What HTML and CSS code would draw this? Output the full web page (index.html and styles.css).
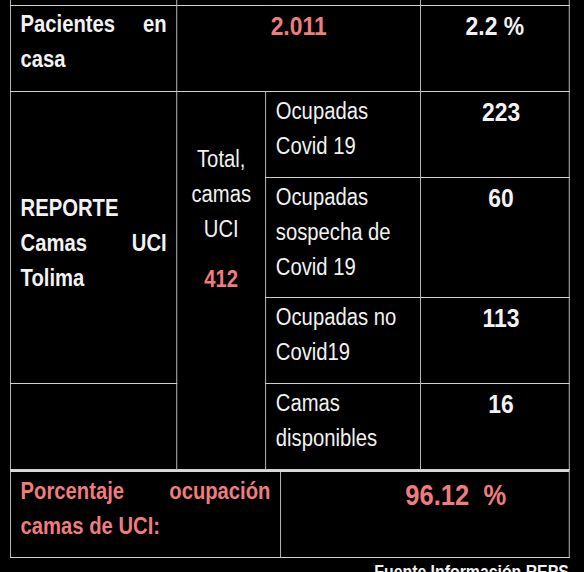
FILE: index.html
```html
<!DOCTYPE html>
<html lang="es">
<head>
    <meta charset="UTF-8">
    <meta name="viewport" content="width=device-width, initial-scale=1.0">
    <title>Reporte camas UCI Tolima</title>
    <link rel="stylesheet" href="styles.css">
</head>
<body>
    <!-- el texto original es Arial "apretado", por eso todo el bloque va con scaleX -->
    <div class="report">
        <table class="grid">
            <colgroup>
                <col class="c1">
                <col class="c2">
                <col class="c3">
                <col class="c4">
            </colgroup>
            <!-- fila anterior, cortada por arriba -->
            <tr class="cut">
                <td></td>
                <td colspan="2"></td>
                <td></td>
            </tr>
            <tr class="r-md">
                <td class="label"><span class="jline">Pacientes en</span>casa</td>
                <td colspan="2" class="num red">2.011</td>
                <td class="num">2.2 %</td>
            </tr>
            <tr class="r-md">
                <td rowspan="3" class="label mid"><span>REPORTE</span><span class="jline">Camas UCI</span>Tolima</td>
                <td rowspan="4" class="total">Total,<br>camas<br>UCI<br><b class="red">412</b></td>
                <td class="desc">Ocupadas<br>Covid 19</td>
                <td class="num val">223</td>
            </tr>
            <tr class="r-lg">
                <td class="desc">Ocupadas<br>sospecha de<br>Covid 19</td>
                <td class="num val">60</td>
            </tr>
            <tr class="r-md">
                <td class="desc">Ocupadas no<br>Covid19</td>
                <td class="num val">113</td>
            </tr>
            <tr class="r-md">
                <td></td>
                <td class="desc">Camas<br>disponibles</td>
                <td class="num val">16</td>
            </tr>
        </table>
        <table class="grid foot">
            <colgroup>
                <col class="f1">
                <col class="f2">
            </colgroup>
            <tr class="r-md">
                <td class="label red"><span class="jline">Porcentaje ocupación</span>camas de UCI:</td>
                <td class="pct red">96.12&nbsp; %</td>
            </tr>
        </table>
        <p class="source">Fuente Información REPS</p>
    </div>
</body>
</html>
```

FILE: styles.css
```css
html {
    overflow: hidden;
}
body {
    margin: 0;
    background: #000;
    color: #f2f2f2;
    font-family: "Liberation Sans", Arial, sans-serif;
    font-size: 23px;
    line-height: 35px;
}
.report {
    width: 635px;
    margin-left: 10px;
    transform: scaleX(0.88);
    transform-origin: 0 0;
}
.grid {
    width: 635px;
    border-collapse: collapse;
    table-layout: fixed;
}
.grid td {
    border: 1px solid #cfcfcf;
    padding: 0 11px;
    vertical-align: top;
}
.c1 { width: 189px; }
.c2 { width: 101px; }
.c3 { width: 176px; }
.c4 { width: 169px; }
.f1 { width: 307px; }
.f2 { width: 328px; }

.cut td {
    border-top: none;
    height: 5px;
    padding: 0;
}
.r-md { height: 86px; }
.r-lg { height: 120px; }

.label {
    font-weight: bold;
    padding-top: 1px !important;
}
.label span {
    display: block;
}
.jline {
    text-align: justify;
    text-align-last: justify;
}
.mid {
    vertical-align: middle !important;
    padding-top: 12px !important;
}
.desc {
    padding-top: 2px !important;
}
.num {
    font-weight: bold;
    font-size: 26px;
    text-align: center;
    padding-top: 3px !important;
}
.val {
    padding-left: 25px !important;
}
.total {
    text-align: center;
    padding: 50px 0 0 !important;
}
.total b {
    display: block;
    margin-top: 15px;
}
.red {
    color: #ef7d7d;
}
.foot {
    border-top: 2px solid #d8d8d8;
}
.foot .label {
    padding-top: 2px !important;
}
.pct {
    font-weight: bold;
    font-size: 29px;
    text-align: center;
    padding: 6px 0 0 70px !important;
}
.source {
    margin: 0;
    text-align: right;
    font-weight: bold;
    font-size: 18px;
    line-height: 22px;
    padding-top: 3px;
}
```
